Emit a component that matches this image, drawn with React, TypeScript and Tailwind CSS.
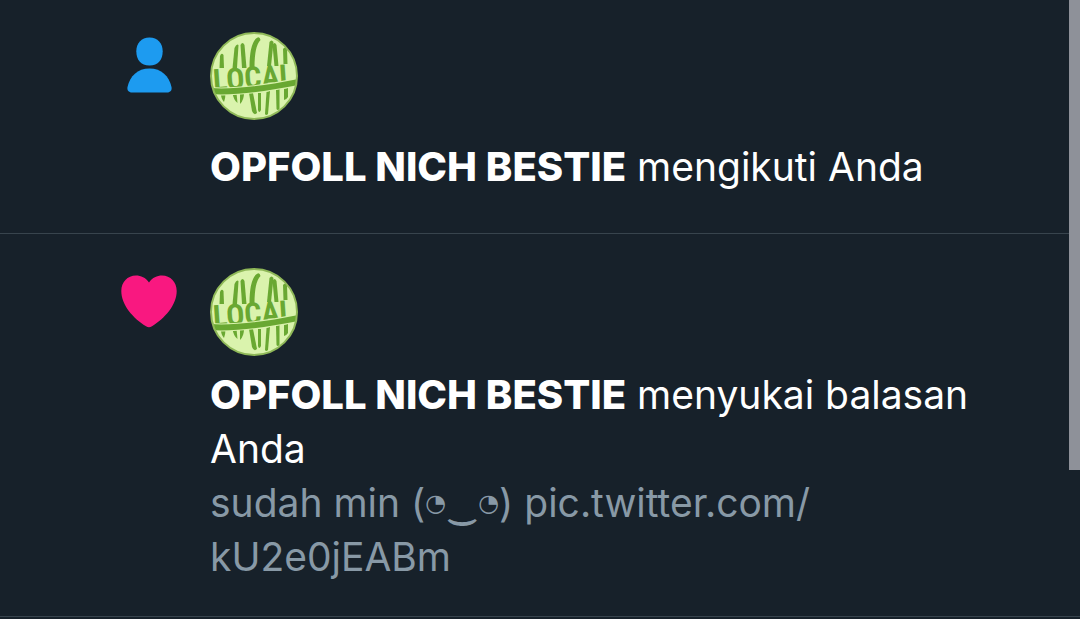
import React from 'react';

interface NotificationItemProps {
  icon: React.ReactNode;
  name: string;
  action: string;
  className: string;
  textClassName: string;
  children?: React.ReactNode;
}

const UserIcon: React.FC = () => (
  <svg viewBox="0 0 56 60" className="h-[60px] w-14" fill="#1d9bf0" aria-hidden="true">
    <path d="M28.500 1.500c8.200 0 13.200 5.800 13.200 13.800 0 8.600-4.400 14.200-13.200 14.200s-13.200-5.600-13.200-14.200c0-8 5-13.800 13.200-13.800z" />
    <path d="M28.500 32.500c12 0 19.500 7.500 22 18.500.7 3.200-1.200 5.500-4.500 5.500H11c-3.300 0-5.200-2.300-4.500-5.500C9 40 16.500 32.500 28.500 32.500z" />
  </svg>
);

const HeartIcon: React.FC = () => (
  <svg viewBox="0 0 56 60" className="h-[60px] w-14" fill="#f91880" aria-hidden="true">
    <path d="M28 10.500C31.500 5.500 36 3.500 41 3.500c8.500 0 14.700 6.500 14.700 15.500 0 14-12 27.500-24.700 35.200-2.200 1.300-3.800 1.300-6 0C12.300 46.500.3 33 .3 19 .3 10 6.500 3.500 15 3.500c5 0 9.500 2 13 7z" />
  </svg>
);

const Avatar: React.FC<{ id: string }> = ({ id }) => (
  <svg viewBox="0 0 88 88" className="size-[88px]" role="img" aria-label="LOCAL">
    <clipPath id={id}>
      <circle cx="44" cy="44" r="43" />
    </clipPath>
    <circle cx="44" cy="44" r="43" fill="#daf3ad" />
    {/* brush strokes above and below the lettering */}
    <g clipPath={`url(#${id})`} fill="#69a832">
      <path d="M9.500 36l.5-12q1.500-4 3.500-1l.5 13z" />
      <path d="M22.500 36l2-20q2-5 4-3l-1.500 23z" />
      <path d="M32 36l-1.500-23q2-4 4 0l2 23z" />
      <path d="M39.500 35q0-21 6-28 4-4 5 1-6 6-6 27z" />
      <path d="M57 34l2.500-24q2-3 4 0l-2.500 24z" />
      <path d="M64.500 34l-2-21q2-4 4 0l2 21z" />
      <path d="M73.500 32l-.5-15q2-3 4 0l.5 15z" />
      <path d="M10.500 60h5q0 6-1.500 10-3-3-3.500-10z" />
      <path d="M22.500 61h4l1 10q-4-3-5-10z" />
      <path d="M30 61h4q0 7-4 11z" />
      <path d="M39 61h4l4 20q-3 3-5-2z" />
      <path d="M48 61h3v17q-2 4-3 0z" />
      <path d="M56.500 60l3.500-1-2 23q-2 2-3 0z" />
      <path d="M66 58l3.500-1v20q-2 2-3 0z" />
      <path d="M74 57l4-1v9q-2 3-4 3z" />
    </g>
    <text
      x="44"
      y="56"
      textAnchor="middle"
      transform="rotate(-4 44 56)"
      fill="#69a832"
      fontFamily="'Roboto Condensed', 'Liberation Sans Narrow', 'Noto Sans', sans-serif"
      fontSize="30"
      fontWeight="700"
    >
      LOCAL
    </text>
    <g clipPath={`url(#${id})`} fill="none">
      <path d="M0 59c28 2 58-3 88-9" stroke="#daf3ad" strokeWidth="8" />
      <path d="M0 59c28 2 58-3 88-9" stroke="#69a832" strokeWidth="6" />
    </g>
    <circle cx="44" cy="44" r="43" fill="none" stroke="#8fb858" strokeWidth="2" />
  </svg>
);

const NotificationItem: React.FC<NotificationItemProps> = ({
  icon,
  name,
  action,
  className,
  textClassName,
  children,
}) => {
  return (
    <article className={`flex gap-[33px] border-b border-[#38444d] pl-[121px] pr-20 ${className}`}>
      <div className="flex-shrink-0 pt-1">{icon}</div>
      <div className="min-w-0 flex-grow">
        <Avatar id={`avatar-${action.split(' ')[0]}`} />
        <div className={`text-[39px] leading-[54px] ${textClassName}`}>
          <p>
            <strong className="text-[40px] font-extrabold">{name}</strong> {action}
          </p>
          {children}
        </div>
      </div>
    </article>
  );
};

const App: React.FC = () => {
  return (
    <main className="relative min-h-screen overflow-hidden bg-[#17212a] font-['Inter','DejaVu_Sans',sans-serif] text-white">
      <NotificationItem
        icon={<UserIcon />}
        name="OPFOLL NICH BESTIE"
        action="mengikuti Anda"
        className="pt-8 pb-[39px]"
        textClassName="pt-5"
      />
      <NotificationItem
        icon={<HeartIcon />}
        name="OPFOLL NICH BESTIE"
        action="menyukai balasan Anda"
        className="pt-[34px] pb-8"
        textClassName="pt-3"
      >
        <p className="text-[#8899a6]">
          sudah min (<span className="align-[6px] text-2xl leading-none">◔</span>‿
          <span className="align-[6px] text-2xl leading-none">◔</span>) pic.twitter.com/
          <wbr />
          kU2e0jEABm
        </p>
      </NotificationItem>
      <div className="absolute top-0 right-0 h-[470px] w-[11px] bg-[#8e9199]" />
    </main>
  );
};

export default App;
